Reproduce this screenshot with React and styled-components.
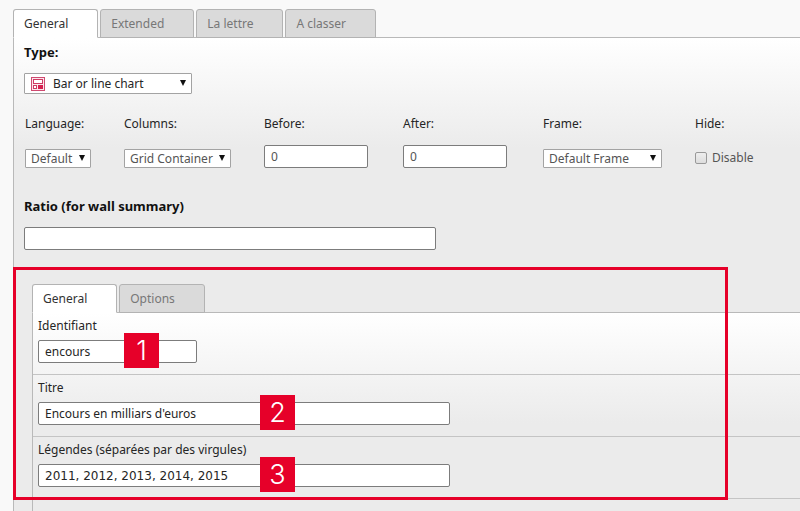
import { useState } from "react";
import styled, { createGlobalStyle } from "styled-components";

const mainTabs = ["General", "Extended", "La lettre", "A classer"];
const chartTabs = ["General", "Options"];

const ChartIcon = () => (
  <svg width="14" height="14" viewBox="0 0 14 14" fill="none">
    <rect x="0.5" y="0.5" width="13" height="13" fill="#fbe6ec" stroke="#cf4a70" />
    <rect x="2.5" y="2.5" width="9" height="4" fill="#fff" stroke="#cf3a62" />
    <rect x="2.5" y="8.5" width="3" height="3" fill="#fff" stroke="#cf3a62" />
    <rect x="7" y="8" width="5" height="4" fill="#d5204f" />
  </svg>
);

const Tabs = ({ names }) => {
  const [active, setActive] = useState(names[0]);

  return (
    <TabList role="tablist">
      {names.map((name) => (
        <Tab
          key={name}
          type="button"
          role="tab"
          aria-selected={active === name}
          $selected={active === name}
          onClick={() => setActive(name)}
        >
          {name}
        </Tab>
      ))}
    </TabList>
  );
};

const Dropdown = ({ id, options, width, tall, icon }) => (
  <SelectBox $width={width} $tall={tall}>
    {icon}
    <Select id={id} $icon={!!icon}>
      {options.map((option) => (
        <option key={option}>{option}</option>
      ))}
    </Select>
  </SelectBox>
);

export default function App() {
  return (
    <Page>
      <GlobalStyle />
      <Tabs names={mainTabs} />
      <Panel>
        <TypeField>
          <Title htmlFor="type">Type:</Title>
          <Dropdown id="type" options={["Bar or line chart"]} width={168} tall icon={<ChartIcon />} />
        </TypeField>

        <Palette>
          <Cell>
            <Label htmlFor="language">Language:</Label>
            <Control>
              <Dropdown id="language" options={["Default"]} width={66} />
            </Control>
          </Cell>
          <Cell>
            <Label htmlFor="columns">Columns:</Label>
            <Control>
              <Dropdown id="columns" options={["Grid Container"]} width={107} />
            </Control>
          </Cell>
          <Cell>
            <Label htmlFor="before">Before:</Label>
            <Control>
              <TextInput id="before" defaultValue="0" $width={104} $muted />
            </Control>
          </Cell>
          <Cell>
            <Label htmlFor="after">After:</Label>
            <Control>
              <TextInput id="after" defaultValue="0" $width={104} $muted />
            </Control>
          </Cell>
          <Cell>
            <Label htmlFor="frame">Frame:</Label>
            <Control>
              <Dropdown id="frame" options={["Default Frame"]} width={119} />
            </Control>
          </Cell>
          <Cell>
            <Label as="span">Hide:</Label>
            <Control>
              <Checkbox id="hide" type="checkbox" />
              <CheckLabel htmlFor="hide">Disable</CheckLabel>
            </Control>
          </Cell>
        </Palette>

        <RatioField>
          <Title htmlFor="ratio">Ratio (for wall summary)</Title>
          <TextInput id="ratio" $width={412} />
        </RatioField>

        <FlexForm>
          <Highlight />
          <Tabs names={chartTabs} />
          <FlexPanel>
            <Row>
              <Label htmlFor="identifiant">Identifiant</Label>
              <InputWrap>
                <TextInput id="identifiant" defaultValue="encours" $width={159} />
                <Badge $left={86}>1</Badge>
              </InputWrap>
            </Row>
            <Row>
              <Label htmlFor="titre">Titre</Label>
              <InputWrap>
                <TextInput id="titre" defaultValue="Encours en milliars d'euros" $width={412} />
                <Badge $left={222}>2</Badge>
              </InputWrap>
            </Row>
            <Row>
              <Label htmlFor="legendes">Légendes (séparées par des virgules)</Label>
              <InputWrap>
                <TextInput id="legendes" defaultValue="2011, 2012, 2013, 2014, 2015" $width={412} $numeric />
                <Badge $left={222}>3</Badge>
              </InputWrap>
            </Row>
          </FlexPanel>
        </FlexForm>
      </Panel>
    </Page>
  );
}

const GlobalStyle = createGlobalStyle`
  * {
    box-sizing: border-box;
  }
  body {
    margin: 0;
    background: #f9f9f9;
    color: #252525;
    font-family: "Noto Sans", sans-serif;
    font-size: 12px;
    line-height: 16px;
  }
  button, input, select {
    font: inherit;
    color: inherit;
  }
`;

const Page = styled.div`
  min-height: 100vh;
  display: flex;
  flex-direction: column;
  padding: 9px 0 0 13px;
  overflow: hidden;
`;

const TabList = styled.div`
  display: flex;
  gap: 2px;
  position: relative;
  margin-bottom: -1px;
`;

const Tab = styled.button`
  height: 29px;
  min-width: 85px;
  padding: 0 29px 0 10px;
  text-align: left;
  border: 1px solid #b3b3b3;
  border-bottom-color: ${({ $selected }) => ($selected ? "#fff" : "#b3b3b3")};
  border-radius: 3px 3px 0 0;
  background: ${({ $selected }) => ($selected ? "#fff" : "#dadada")};
  color: ${({ $selected }) => ($selected ? "#333" : "#777")};
`;

const Panel = styled.main`
  flex: 1;
  display: flex;
  flex-direction: column;
  border-top: 1px solid #b9b9b9;
  border-left: 1px solid #b9b9b9;
  background: linear-gradient(#fff, #ebebeb 110px);
`;

const TypeField = styled.div`
  display: flex;
  flex-direction: column;
  gap: 13px;
  padding: 6px 10px 0;
`;

const Title = styled.label`
  font-weight: 700;
  font-size: 13px;
  color: #111;
`;

const Label = styled.label`
  display: block;
`;

const SelectBox = styled.div`
  position: relative;
  display: flex;
  width: ${({ $width }) => $width}px;
  height: ${({ $tall }) => ($tall ? 21 : 19)}px;
  color: ${({ $tall }) => ($tall ? "#252525" : "#555")};
  & > svg {
    position: absolute;
    left: 7px;
    top: 4px;
    pointer-events: none;
  }
  &::after {
    content: "";
    position: absolute;
    right: 6px;
    top: ${({ $tall }) => ($tall ? 7 : 6)}px;
    border: 3px solid transparent;
    border-top: 6px solid #111;
    border-bottom: 0;
    pointer-events: none;
  }
`;

const Select = styled.select`
  appearance: none;
  width: 100%;
  padding: 0 0 0 ${({ $icon }) => ($icon ? 28 : 5)}px;
  border: 1px solid #a3a3a3;
  border-radius: 1px;
  background: #fff;
`;

const Palette = styled.div`
  display: grid;
  grid-template-columns: 99fr 140fr 139fr 140fr 152fr 105fr;
  padding: 22px 0 0 11px;
`;

const Cell = styled.div`
  display: flex;
  flex-direction: column;
  gap: 13px;
`;

const Control = styled.div`
  display: flex;
  align-items: flex-end;
  height: 23px;
`;

const TextInput = styled.input`
  display: block;
  width: ${({ $width }) => $width}px;
  max-width: 100%;
  height: 23px;
  padding: 0 6px;
  border: 1px solid #7c7c7c;
  border-radius: 2px;
  background: #fff;
  color: ${({ $muted }) => ($muted ? "#555" : "#252525")};
  font-family: ${({ $numeric }) => ($numeric ? '"DejaVu Sans"' : '"Noto Sans"')}, sans-serif;
`;

const Checkbox = styled.input`
  appearance: none;
  width: 12px;
  height: 12px;
  margin: 0 5px 4px 0;
  border: 1px solid #999;
  border-radius: 2px;
  background: linear-gradient(#eee, #ddd);
  &:checked {
    background: #555;
  }
`;

const CheckLabel = styled.label`
  padding-bottom: 2px;
  color: #555;
`;

const RatioField = styled.div`
  display: flex;
  flex-direction: column;
  gap: 13px;
  padding: 30px 10px 0;
`;

const FlexForm = styled.section`
  position: relative;
  flex: 1;
  display: flex;
  flex-direction: column;
  margin-top: 17px;
  padding: 17px 0 0 18px;
`;

/* red outline over the chart fields */
const Highlight = styled.div`
  position: absolute;
  z-index: 1;
  top: 0;
  left: -1px;
  right: 72px;
  height: 233px;
  border: 3px solid #e60029;
  pointer-events: none;
`;

const FlexPanel = styled.div`
  flex: 1;
  border-top: 1px solid #b9b9b9;
  border-left: 1px solid #b9b9b9;
  background: linear-gradient(#fff, #ebebeb 110px);
`;

const Row = styled.div`
  display: flex;
  flex-direction: column;
  gap: 6px;
  padding: 5px 5px 11px;
  border-bottom: 1px solid #c4c4c4;
`;

const InputWrap = styled.div`
  position: relative;
`;

const Badge = styled.span`
  position: absolute;
  z-index: 2;
  top: -7px;
  left: ${({ $left }) => $left}px;
  width: 35px;
  height: 35px;
  background: #e60029;
  color: #fff;
  font-family: "Inter", "Liberation Sans", sans-serif;
  font-size: 27px;
  font-weight: 300;
  line-height: 36px;
  text-align: center;
`;
